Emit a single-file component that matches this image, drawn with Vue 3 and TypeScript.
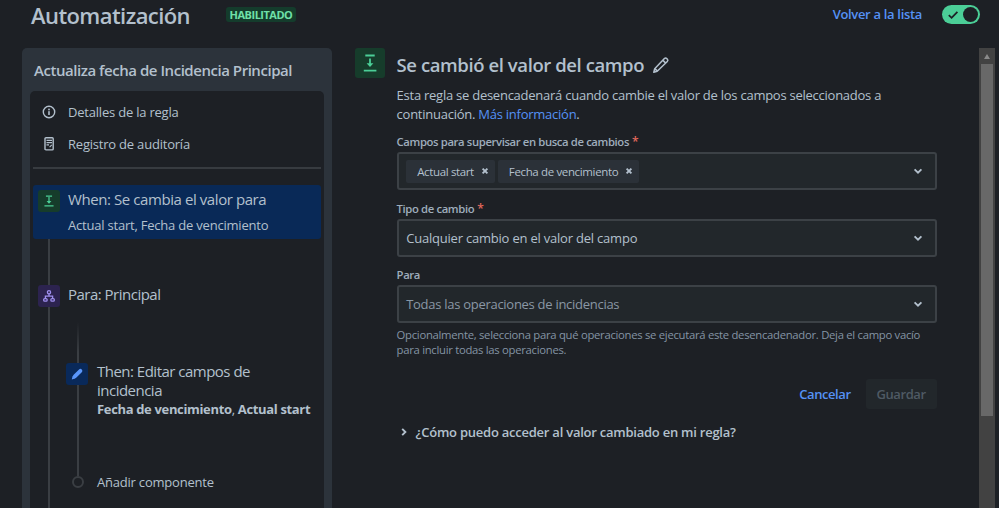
<script setup lang="ts">
import { ref } from 'vue'

interface Field {
  id: string
  label: string
  required: boolean
  tags?: string[]
  value?: string
  placeholder?: string
}

const enabled = ref(true)

const fields = ref<Field[]>([
  {
    id: 'watched',
    label: 'Campos para supervisar en busca de cambios',
    required: true,
    tags: ['Actual start', 'Fecha de vencimiento'],
  },
  {
    id: 'change-type',
    label: 'Tipo de cambio',
    required: true,
    value: 'Cualquier cambio en el valor del campo',
  },
  {
    id: 'operations',
    label: 'Para',
    required: false,
    placeholder: 'Todas las operaciones de incidencias',
  },
])

const removeTag = (field: Field, tag: string) => {
  field.tags = field.tags?.filter((t) => t !== tag)
}
</script>

<template>
  <div class="page">
    <header class="header">
      <h1 class="page-title">Automatización</h1>
      <span class="lozenge">HABILITADO</span>
      <a class="back-link">Volver a la lista</a>
      <button :class="['toggle', { on: enabled }]" @click="enabled = !enabled">
        <svg class="toggle-check" viewBox="0 0 12 12" width="12" height="12">
          <path d="M1.8 6.2 L4.6 8.8 L10.4 2.8" />
        </svg>
        <span class="knob"></span>
      </button>
    </header>

    <div class="body">
      <aside class="sidebar">
        <h2 class="rule-name">Actualiza fecha de Incidencia Principal</h2>
        <div class="rule-card">
          <div class="nav-item">
            <svg class="nav-icon" viewBox="0 0 16 16" width="16" height="16">
              <circle cx="8" cy="8" r="5.7" fill="none" stroke="currentColor" stroke-width="1.4" />
              <circle cx="8" cy="5.5" r="0.9" fill="currentColor" />
              <rect x="7.2" y="7.1" width="1.6" height="3.9" rx="0.6" fill="currentColor" />
            </svg>
            <span>Detalles de la regla</span>
          </div>
          <div class="nav-item">
            <svg class="nav-icon" viewBox="0 0 16 16" width="16" height="16">
              <rect x="4" y="1.7" width="8.2" height="12.2" rx="1" fill="none" stroke="currentColor" stroke-width="1.4" />
              <path d="M5.5 4.4H11M5.5 6.6H11M5.5 8.8H8" stroke="currentColor" stroke-width="1.2" />
              <path d="M8.6 11.2 L10.8 8.8" stroke="currentColor" stroke-width="1.1" />
            </svg>
            <span>Registro de auditoría</span>
          </div>
          <div class="divider"></div>

          <div class="step selected">
            <span class="step-icon green">
              <svg viewBox="0 0 16 16" width="14" height="14">
                <path d="M4.5 2.5h7M2.8 13.5h10.4M8 3.5v6.5" fill="none" stroke="currentColor" stroke-width="1.4" />
                <path d="M5.2 8 L8 11.2 L10.8 8z" fill="currentColor" />
              </svg>
            </span>
            <div class="step-text">
              <div class="step-title">When: Se cambia el valor para</div>
              <div class="step-sub">Actual start, Fecha de vencimiento</div>
            </div>
          </div>

          <div class="branch">
            <div class="step">
              <span class="step-icon purple">
                <svg viewBox="0 0 14 14" width="14" height="14" fill="none" stroke="currentColor" stroke-width="1.3">
                  <circle cx="7" cy="3.2" r="1.6" />
                  <rect x="1.7" y="9.6" width="3.4" height="2.6" rx="1" />
                  <rect x="8.9" y="9.6" width="3.4" height="2.6" rx="1" />
                  <path d="M7 4.8V7M3.4 9.6V7.2H10.6V9.6" />
                </svg>
              </span>
              <div class="step-title tight">Para: Principal</div>
            </div>

            <div class="nested">
              <div class="step nested-step">
                <span class="step-icon blue">
                  <svg viewBox="0 0 14 14" width="14" height="14">
                    <path d="M1.8 12.4 L2.6 9 L5.1 11.5z" fill="currentColor" />
                    <path d="M4.8 9.4 L10.4 3.8" stroke="currentColor" stroke-width="3.9" stroke-linecap="round" />
                  </svg>
                </span>
                <div class="nested-text">
                  <div class="step-title tight">Then: Editar campos de<br />incidencia</div>
                  <div class="step-fields"><b>Fecha de vencimiento</b>, <b>Actual start</b></div>
                </div>
              </div>
              <div class="add-row">
                <span class="add-dot"></span>
                <span>Añadir componente</span>
              </div>
            </div>
          </div>
        </div>
      </aside>

      <main class="detail">
        <span class="detail-icon">
          <svg viewBox="0 0 20 20" width="20" height="20">
            <path d="M5.3 2.5h9.4M3.8 17.6h12.6M10 5.5v7" fill="none" stroke="currentColor" stroke-width="1.8" />
            <path d="M6.6 10.2 L10 14 L13.4 10.2z" fill="currentColor" />
          </svg>
        </span>
        <div class="form">
          <div class="form-head">
            <h2 class="form-title">Se cambió el valor del campo</h2>
            <svg class="pencil" viewBox="0 0 18 18" width="18" height="18">
              <path d="M5.2 15.3 L1.8 16.2 L2.7 12.8 L12.4 2.6 Q13.6 1.5 14.8 2.6 L15.4 3.3 Q16.4 4.4 15.3 5.5z M11 4.4 L13.7 7.1 M2.9 12.6 L5.4 15.1" />
            </svg>
          </div>
          <p class="intro">
            Esta regla se desencadenará cuando cambie el valor de los campos seleccionados a<br />
            continuación. <a class="link">Más información</a>.
          </p>

          <div v-for="field in fields" :key="field.id" class="field">
            <label class="field-label">{{ field.label }}<span v-if="field.required" class="required">*</span></label>
            <div class="select">
              <div v-if="field.tags" class="tags">
                <span v-for="tag in field.tags" :key="tag" class="tag">
                  <span>{{ tag }}</span>
                  <svg class="tag-x" viewBox="0 0 8 8" width="8" height="8" @click="removeTag(field, tag)">
                    <path d="M1.6 1.6 L6.4 6.4 M6.4 1.6 L1.6 6.4" />
                  </svg>
                </span>
              </div>
              <span v-else-if="field.value" class="value">{{ field.value }}</span>
              <span v-else class="placeholder">{{ field.placeholder }}</span>
              <svg class="chevron" viewBox="0 0 10 10" width="10" height="10">
                <path d="M1.6 3.4 L5 6.6 L8.4 3.4" />
              </svg>
            </div>
          </div>

          <p class="help">
            Opcionalmente, selecciona para qué operaciones se ejecutará este desencadenador. Deja el campo vacío<br />
            para incluir todas las operaciones.
          </p>

          <div class="actions">
            <button class="cancel">Cancelar</button>
            <button class="save" disabled>Guardar</button>
          </div>

          <div class="faq">
            <svg class="faq-arrow" viewBox="0 0 10 10" width="10" height="10">
              <path d="M3.2 1.8 L6.4 5 L3.2 8.2" />
            </svg>
            <span>¿Cómo puedo acceder al valor cambiado en mi regla?</span>
          </div>
        </div>
        <div class="scrollbar">
          <div class="scroll-up"></div>
          <div class="scroll-thumb"></div>
        </div>
      </main>
    </div>
  </div>
</template>

<style>
body {
  background: #1d2025;
}
</style>

<style scoped>
.page {
  height: 508px;
  overflow: hidden;
  display: flex;
  flex-direction: column;
  background: #1d2025;
  color: #b3c0cd;
  font-family: 'Open Sans', 'Noto Sans', sans-serif;
  font-size: 13px;
  letter-spacing: -0.21px;
}

h1,
h2,
p {
  margin: 0;
}

span,
h1,
h2,
p,
label,
button,
.step-title,
.step-sub,
.step-fields {
  white-space: nowrap;
}

button {
  border: none;
  font-family: inherit;
}

.header {
  display: flex;
  align-items: flex-start;
  height: 48px;
  flex-shrink: 0;
  padding: 0 19px 0 31px;
}

.page-title {
  width: 195px;
  font-size: 22px;
  font-weight: 600;
  line-height: 31px;
  letter-spacing: -0.57px;
}

.lozenge {
  width: 70px;
  height: 15px;
  margin-top: 7px;
  border-radius: 3px;
  background: #143c2c;
  color: #6fe0a8;
  font-size: 11px;
  font-weight: 700;
  line-height: 15px;
  letter-spacing: -0.5px;
  text-align: center;
}

.back-link {
  margin-left: auto;
  margin-right: 20px;
  color: #5592f5;
  font-weight: 600;
  line-height: 29px;
  letter-spacing: -0.32px;
}

.toggle {
  display: flex;
  align-items: center;
  justify-content: space-between;
  width: 38px;
  height: 19px;
  margin-top: 5px;
  padding: 0 2px 0 5px;
  border-radius: 10px;
  background: #596773;
}

.toggle.on {
  background: #4bce97;
}

.toggle-check path {
  fill: none;
  stroke: #1d2025;
  stroke-width: 1.8;
}

.knob {
  width: 15px;
  height: 15px;
  border-radius: 50%;
  background: #1d2025;
}

.body {
  display: flex;
  height: 460px;
}

.sidebar {
  width: 310px;
  height: 470px;
  flex-shrink: 0;
  margin-left: 22px;
  padding: 0 8px;
  box-sizing: border-box;
  border-radius: 5px 5px 0 0;
  background: #2c333b;
}

.rule-name {
  height: 43px;
  padding-left: 4px;
  font-size: 15px;
  font-weight: 600;
  line-height: 44px;
  letter-spacing: -0.46px;
}

.rule-card {
  height: 427px;
  padding: 5px 3px 0;
  border-radius: 5px 5px 0 0;
  background: #1d2025;
}

.nav-item {
  display: flex;
  align-items: center;
  height: 32px;
  padding-left: 8px;
}

.nav-icon {
  width: 16px;
  margin-right: 11px;
  flex-shrink: 0;
}

.divider {
  height: 2px;
  margin: 7px 0 16px;
  background: #373b40;
}

.step {
  display: flex;
  align-items: flex-start;
}

.step-icon {
  display: flex;
  align-items: center;
  justify-content: center;
  width: 22px;
  height: 22px;
  margin-right: 8px;
  flex-shrink: 0;
  border-radius: 3px;
}

.green {
  background: #163c2b;
  color: #4bce97;
}

.purple {
  background: #2c234f;
  color: #9f8fef;
}

.blue {
  background: #09295a;
  color: #5a96fb;
}

.selected {
  height: 54px;
  padding: 5px 5px 0 5px;
  box-sizing: border-box;
  border-radius: 3px;
  background: #092957;
}

.step-title {
  font-size: 15px;
  line-height: 19px;
  letter-spacing: -0.42px;
}

.step-title.tight {
  letter-spacing: -0.51px;
}

.step-sub {
  margin-top: 7px;
  line-height: 19px;
}

/* the outer line runs through the icons and on below the card */
.branch {
  height: 269px;
  padding: 46px 0 0 5px;
  box-sizing: border-box;
  background: linear-gradient(#3a3e43, #3a3e43) 15px 0 / 2px 100% no-repeat;
}

.nested {
  margin: 15px 0 0 28px;
  padding-top: 41px;
  background: linear-gradient(rgba(58, 62, 67, 0), #3a3e43 20%) 11px 0 / 2px 154px no-repeat;
}

.nested-step {
  height: 109px;
}

.nested-text {
  margin-top: -1px;
  padding-left: 1px;
}

.step-fields {
  line-height: 18px;
  letter-spacing: -0.34px;
}

.add-row {
  display: flex;
  align-items: center;
  height: 20px;
}

.add-dot {
  width: 8px;
  height: 8px;
  margin: 0 13px 0 6px;
  border: 2px solid #3a3e43;
  border-radius: 50%;
  background: #1d2025;
}

.detail {
  display: flex;
  flex: 1;
  padding: 0 4px 0 23px;
}

.detail-icon {
  display: flex;
  align-items: center;
  justify-content: center;
  width: 30px;
  height: 30px;
  margin-right: 11.6px;
  border-radius: 3px;
  background: #163c2b;
  color: #4bce97;
}

.form {
  width: 540px;
}

.form-head {
  display: flex;
  align-items: center;
  height: 33px;
}

.form-title {
  width: 247px;
  font-size: 18.5px;
  font-weight: 600;
  line-height: 32px;
  letter-spacing: -0.41px;
}

.pencil {
  margin-left: 8px;
}

.pencil path {
  fill: none;
  stroke: currentColor;
  stroke-width: 1.5;
  stroke-linejoin: round;
}

.intro {
  margin: 5px 0 9.3px;
  line-height: 19px;
  letter-spacing: -0.25px;
}

.link {
  color: #5592f5;
}

.field {
  margin-bottom: 9.3px;
}

.field-label {
  display: flex;
  height: 19px;
  font-size: 11.3px;
  font-weight: 600;
  line-height: 18px;
  letter-spacing: -0.38px;
  color: #9fadbc;
}

.required {
  margin-left: 3px;
  color: #e2685c;
  font-size: 12px;
}

.select {
  display: flex;
  align-items: center;
  justify-content: space-between;
  height: 38px;
  box-sizing: border-box;
  padding: 0 12px 0 7.6px;
  border: 2px solid #3c4146;
  border-radius: 3px;
  background: #22272b;
}

.tags {
  display: flex;
  gap: 3px;
}

.tag {
  display: flex;
  align-items: center;
  height: 23px;
  padding: 0 6px 0 11px;
  border-radius: 2px;
  background: #2b3138;
  font-size: 11.5px;
  letter-spacing: -0.36px;
}

.tag-x {
  margin-left: 7px;
}

.tag-x path,
.chevron path,
.faq-arrow path {
  fill: none;
  stroke: #b3c0cd;
  stroke-width: 1.9;
}

.placeholder {
  color: #8a97a5;
  letter-spacing: -0.28px;
}

.help {
  margin-top: -5px;
  color: #8494a4;
  font-size: 11.3px;
  line-height: 15.3px;
  letter-spacing: -0.29px;
}

.actions {
  display: flex;
  justify-content: flex-end;
  gap: 15px;
  margin-top: 21px;
}

.actions button {
  height: 30px;
  padding: 0;
  font-size: 13px;
  font-weight: 600;
  letter-spacing: -0.42px;
}

.cancel {
  background: none;
  color: #5592f5;
}

.save {
  width: 71px;
  border-radius: 3px;
  background: #22272b;
  color: #4f5a64;
}

.faq {
  display: flex;
  align-items: center;
  height: 20px;
  margin-top: 13px;
  font-weight: 600;
  letter-spacing: -0.24px;
}

.faq-arrow {
  margin: 0 7px 0 2px;
}

.scrollbar {
  display: flex;
  flex-direction: column;
  align-items: center;
  width: 16px;
  margin-left: auto;
  background: #424242;
}

.scroll-up {
  margin: 6px 0 5px;
  border: 3px solid transparent;
  border-top: none;
  border-bottom: 5px solid #8a8a8a;
}

.scroll-thumb {
  width: 12px;
  height: 352px;
  background: #686868;
}
</style>
